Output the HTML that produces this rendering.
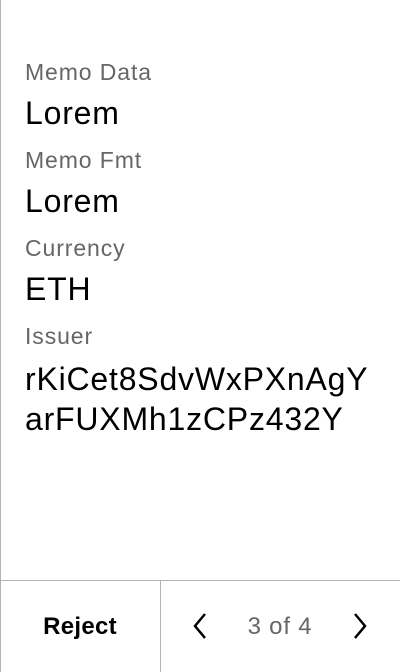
<!DOCTYPE html>
<html><head><style>
body{margin:0;width:400px;height:672px;position:relative;overflow:hidden;background:#fff;font-family:"Liberation Sans",sans-serif}
.lb{position:absolute;left:0;top:0;width:1px;height:672px;background:#b3b3b3}
.t{position:absolute;left:25px;white-space:nowrap}
.l{font-size:23px;color:#666;line-height:1;letter-spacing:0.9px}
.v{font-size:32px;color:#000;line-height:1;letter-spacing:0.8px}
.ft{position:absolute;left:0;top:580px;width:400px;height:1px;background:#b3b3b3}
.dv{position:absolute;left:160px;top:580px;width:1px;height:92px;background:#b3b3b3}
</style></head><body>
<div class="lb"></div>
<div class="t l" style="top:61px">Memo Data</div>
<div class="t v" style="top:97px">Lorem</div>
<div class="t l" style="top:149px">Memo Fmt</div>
<div class="t v" style="top:185px">Lorem</div>
<div class="t l" style="top:237px">Currency</div>
<div class="t v" style="top:273px">ETH</div>
<div class="t l" style="top:325px">Issuer</div>
<div class="t v" style="top:359px;line-height:40px">rKiCet8SdvWxPXnAgY<br>arFUXMh1zCPz432Y</div>
<div class="ft"></div><div class="dv"></div>
<div style="position:absolute;left:0;width:160px;top:613px;text-align:center;font-size:24px;font-weight:bold;color:#000;letter-spacing:0.3px">Reject</div>
<div style="position:absolute;left:200px;width:160px;top:613px;text-align:center;font-size:24px;color:#666;letter-spacing:0.8px">3 of 4</div>
<svg style="position:absolute;left:190px;top:612px" width="20" height="28"><path d="M15 2 L5 14 L15 26" fill="none" stroke="#000" stroke-width="2.5"/></svg>
<svg style="position:absolute;left:350px;top:612px" width="20" height="28"><path d="M5 2 L15 14 L5 26" fill="none" stroke="#000" stroke-width="2.5"/></svg>
</body></html>
